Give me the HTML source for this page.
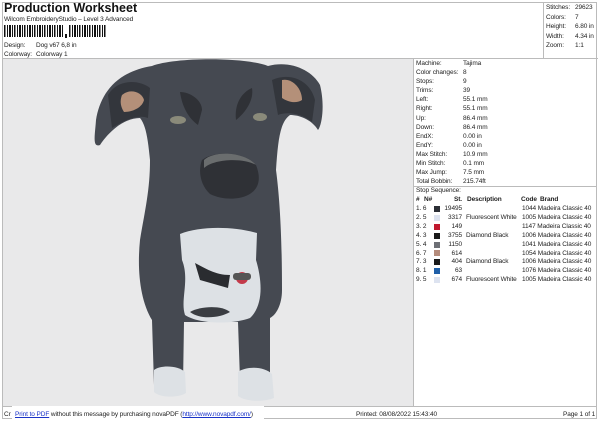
<!DOCTYPE html>
<html><head><style>
body{margin:0;width:600px;height:424px;background:#fff;font-family:"Liberation Sans",sans-serif;color:#222;position:relative;overflow:hidden}
.a{position:absolute;white-space:nowrap}
.s{font-size:6.5px;line-height:9px;letter-spacing:-0.1px}
</style></head><body>
<div class="a" style="left:2px;top:2px;width:595px;height:417px;border:1px solid #bbb;box-sizing:border-box"></div>
<div class="a" style="left:4px;top:1px;font-size:12.5px;font-weight:bold;color:#111">Production Worksheet</div>
<div class="a s" style="left:4px;top:15px">Wilcom EmbroideryStudio – Level 3 Advanced</div>
<svg class="a" style="left:4px;top:25px" width="112" height="13">
<g fill="#111">
<rect x="0" y="0" width="1.5" height="12"/><rect x="3" y="0" width="1" height="12"/><rect x="5" y="0" width="2" height="12"/><rect x="8" y="0" width="1" height="12"/><rect x="10" y="0" width="1.5" height="12"/><rect x="13" y="0" width="1" height="12"/><rect x="15" y="0" width="2" height="12"/><rect x="18" y="0" width="1" height="12"/><rect x="20" y="0" width="1.5" height="12"/><rect x="23" y="0" width="1" height="12"/><rect x="25" y="0" width="2" height="12"/><rect x="28" y="0" width="1" height="12"/><rect x="30" y="0" width="1.5" height="12"/><rect x="33" y="0" width="1" height="12"/><rect x="35" y="0" width="2" height="12"/><rect x="38" y="0" width="1" height="12"/><rect x="40" y="0" width="1.5" height="12"/><rect x="43" y="0" width="1" height="12"/><rect x="45" y="0" width="2" height="12"/><rect x="48" y="0" width="1" height="12"/><rect x="50" y="0" width="1.5" height="12"/><rect x="53" y="0" width="1" height="12"/><rect x="55" y="0" width="2" height="12"/><rect x="58" y="0" width="1" height="12"/><rect x="61" y="9" width="2" height="4"/><rect x="65" y="0" width="1.5" height="12"/><rect x="68" y="0" width="1" height="12"/><rect x="70" y="0" width="2" height="12"/><rect x="73" y="0" width="1" height="12"/><rect x="75" y="0" width="1.5" height="12"/><rect x="78" y="0" width="1" height="12"/><rect x="80" y="0" width="2" height="12"/><rect x="83" y="0" width="1" height="12"/><rect x="85" y="0" width="1.5" height="12"/><rect x="88" y="0" width="1" height="12"/><rect x="90" y="0" width="2" height="12"/><rect x="93" y="0" width="1" height="12"/><rect x="95" y="0" width="1.5" height="12"/><rect x="98" y="0" width="1" height="12"/><rect x="100" y="0" width="1.5" height="12"/></g></svg>
<div class="a s" style="left:4px;top:41px">Design:</div><div class="a s" style="left:36px;top:41px">Dog v67 6,8 in</div>
<div class="a s" style="left:4px;top:50px">Colorway:</div><div class="a s" style="left:36px;top:50px">Colorway 1</div>
<div class="a" style="left:543px;top:2px;width:54px;height:56px;border-left:1px solid #bbb;border-bottom:1px solid #bbb"></div>
<div class="a s" style="left:546px;top:3px;line-height:9.5px">Stitches:<br>Colors:<br>Height:<br>Width:<br>Zoom:</div>
<div class="a s" style="left:575px;top:3px;line-height:9.5px">29623<br>7<br>6.80 in<br>4.34 in<br>1:1</div>
<div class="a" style="left:2px;top:58px;width:595px;border-top:1px solid #bbb"></div>
<div class="a" style="left:3px;top:59px;width:410px;height:347px;background:#e9e9ea"></div>
<div class="a" style="left:413px;top:59px;height:347px;border-left:1px solid #bbb"></div>
<svg class="a" style="left:0;top:0" width="413" height="406">
<path d="M152 66 C175 57 245 57 268 66 C290 60 312 70 320 85 C325 105 322 125 318 130 C312 120 300 115 290 115 C280 122 278 140 276 170 C280 200 282 240 282 290 C282 305 276 315 270 318 L270 380 L240 380 L238 322 L184 322 L183 385 L154 385 L152 320 C140 300 137 270 140 240 C145 210 150 190 150 160 C148 140 146 125 140 118 C125 118 110 130 100 145 C92 148 95 135 96 120 C100 95 115 72 152 66 Z" fill="#454951"/>
<path d="M108 95 C118 78 140 80 150 88 L148 118 C138 114 125 120 112 128 Z" fill="#33363c"/>
<path d="M272 80 C290 72 310 80 315 100 L312 122 C300 112 285 112 278 115 Z" fill="#33363c"/>
<path d="M122 95 C130 88 142 92 144 100 C142 108 132 112 124 112 C120 106 120 100 122 95 Z" fill="#b49079"/>
<path d="M282 80 C292 78 302 88 302 100 C296 104 288 102 282 98 Z" fill="#b49079"/>
<path d="M180 92 C190 92 202 100 202 110 L198 125 C188 118 182 106 180 92 Z" fill="#2f3136"/>
<path d="M252 88 C242 92 234 104 236 120 C246 112 254 100 252 88 Z" fill="#2f3136"/>
<ellipse cx="178" cy="120" rx="8" ry="4" fill="#8a8a7a"/><ellipse cx="260" cy="117" rx="7" ry="4" fill="#8a8a7a"/>
<path d="M202 160 C215 150 245 152 256 165 C262 180 258 190 248 195 C238 200 222 200 210 194 C200 185 198 170 202 160 Z" fill="#2f3136"/>
<path d="M204 160 C215 150 245 152 256 165 C245 158 215 158 204 168 Z" fill="#6a6d6e"/>
<path d="M180 234 C200 226 232 226 257 233 L256 260 C262 280 264 305 250 318 C235 324 200 325 185 315 C180 300 190 280 182 260 Z" fill="#dde1e5"/>
<path d="M190 312 C200 306 222 305 230 312 C220 318 200 320 190 312 Z" fill="#3a3d42"/>
<path d="M195 263 C205 268 215 275 230 275 L228 288 L200 280 Z" fill="#2a2c30"/>
<circle cx="242" cy="278" r="6" fill="#c33a4a"/><rect x="233" y="273" width="18" height="7" rx="3" fill="#555"/>
<path d="M154 370 C160 365 178 365 185 372 L186 393 C178 398 160 398 154 392 Z" fill="#dde1e5"/>
<path d="M238 372 C246 366 264 366 272 374 L274 398 C264 402 246 402 238 396 Z" fill="#dde1e5"/>
</svg>
<div class="a s" style="left:416px;top:59px;line-height:9.1px">Machine:<br>Color changes:<br>Stops:<br>Trims:<br>Left:<br>Right:<br>Up:<br>Down:<br>EndX:<br>EndY:<br>Max Stitch:<br>Min Stitch:<br>Max Jump:<br>Total Bobbin:</div>
<div class="a s" style="left:463px;top:59px;line-height:9.1px">Tajima<br>8<br>9<br>39<br>55.1 mm<br>55.1 mm<br>86.4 mm<br>86.4 mm<br>0.00 in<br>0.00 in<br>10.9 mm<br>0.1 mm<br>7.5 mm<br>215.74ft</div>
<div class="a" style="left:413px;top:186px;width:184px;border-top:1px solid #bbb"></div>
<div class="a s" style="left:416px;top:186px">Stop Sequence:</div>
<div class="a s" style="left:414px;top:196px;line-height:8.9px;font-weight:bold;text-decoration:underline">
<span class="a" style="left:2px">#</span><span class="a" style="left:10px">N#</span><span class="a" style="left:40px">St.</span><span class="a" style="left:53px">Description</span><span class="a" style="left:107px">Code</span><span class="a" style="left:126px">Brand</span></div>
<div class="a s" style="left:416px;top:205px;line-height:8.9px">1. 6<br>2. 5<br>3. 2<br>4. 3<br>5. 4<br>6. 7<br>7. 3<br>8. 1<br>9. 5</div>
<div class="a" style="left:434px;top:206px;width:6px">
<div style="height:6px;background:#2c2f36;margin-bottom:2.9px"></div><div style="height:6px;background:#dde3f0;margin-bottom:2.9px"></div><div style="height:6px;background:#c0182e;margin-bottom:2.9px"></div><div style="height:6px;background:#1a1a1a;margin-bottom:2.9px"></div><div style="height:6px;background:#6d6f75;margin-bottom:2.9px"></div><div style="height:6px;background:#b58c7c;margin-bottom:2.9px"></div><div style="height:6px;background:#1a1a1a;margin-bottom:2.9px"></div><div style="height:6px;background:#1f5fa8;margin-bottom:2.9px"></div><div style="height:6px;background:#dde3f0"></div></div>
<div class="a s" style="left:440px;top:205px;width:22px;text-align:right;line-height:8.9px">19495<br>3317<br>149<br>3755<br>1150<br>614<br>404<br>63<br>674</div>
<div class="a s" style="left:466px;top:205px;line-height:8.9px">&nbsp;<br>Fluorescent White<br>&nbsp;<br>Diamond Black<br>&nbsp;<br>&nbsp;<br>Diamond Black<br>&nbsp;<br>Fluorescent White</div>
<div class="a s" style="left:522px;top:205px;line-height:8.9px">1044 Madeira Classic 40<br>1005 Madeira Classic 40<br>1147 Madeira Classic 40<br>1006 Madeira Classic 40<br>1041 Madeira Classic 40<br>1054 Madeira Classic 40<br>1006 Madeira Classic 40<br>1076 Madeira Classic 40<br>1005 Madeira Classic 40</div>
<div class="a" style="left:2px;top:406px;width:595px;border-top:1px solid #bbb"></div>
<div class="a s" style="left:4px;top:410px">Cr</div>
<div class="a" style="left:12px;top:406px;width:252px;height:13px;background:#fff"></div>
<div class="a s" style="left:15px;top:410px"><span style="color:#1a33c8;text-decoration:underline">Print to PDF</span> without this message by purchasing novaPDF (<span style="color:#1a33c8;text-decoration:underline">http://www.novapdf.com/</span>)</div>
<div class="a s" style="left:356px;top:410px">Printed: 08/08/2022 15:43:40</div>
<div class="a s" style="left:563px;top:410px">Page 1 of 1</div>
</body></html>
